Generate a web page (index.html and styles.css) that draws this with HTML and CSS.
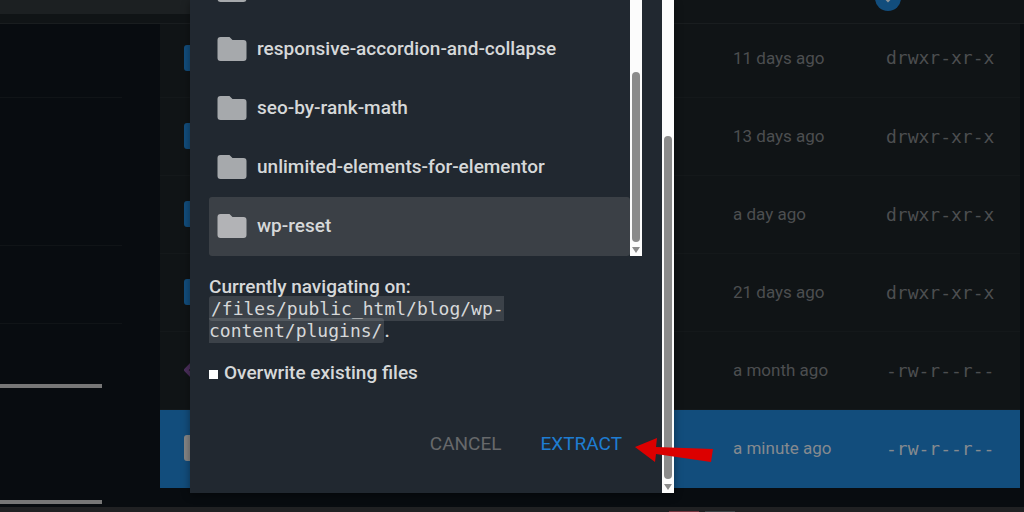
FILE: index.html
```
<!DOCTYPE html>
<html lang="en">
<head>
    <meta charset="UTF-8">
    <meta name="viewport" content="width=device-width, initial-scale=1.0">
    <title>File Manager</title>
    <link rel="stylesheet" href="styles.css">
</head>
<body>
    <header class="toolbar">
        <div class="tabs"></div>
        <button class="sort-btn" aria-label="Sort">
            <svg width="26" height="26" viewBox="0 0 26 26"><path d="M13 7v9M10 13l3 3 3-3" fill="none" stroke="#8d9499" stroke-width="2"/></svg>
        </button>
    </header>

    <main class="manager">
        <aside class="sidebar">
            <div class="group"></div>
            <div class="group tall"></div>
            <div class="group"></div>
            <div class="bar"></div>
            <div class="bar second"></div>
        </aside>

        <table class="files">
            <colgroup>
                <col>
                <col class="col-date">
                <col class="col-perm">
            </colgroup>
            <tbody>
                <tr>
                    <td><span class="icon"></span></td>
                    <td>11 days ago</td>
                    <td class="perm">drwxr-xr-x</td>
                </tr>
                <tr>
                    <td><span class="icon"></span></td>
                    <td>13 days ago</td>
                    <td class="perm">drwxr-xr-x</td>
                </tr>
                <tr>
                    <td><span class="icon"></span></td>
                    <td>a day ago</td>
                    <td class="perm">drwxr-xr-x</td>
                </tr>
                <tr>
                    <td><span class="icon"></span></td>
                    <td>21 days ago</td>
                    <td class="perm">drwxr-xr-x</td>
                </tr>
                <tr>
                    <td>
                        <svg class="code-icon" width="26" height="26" viewBox="0 0 26 26"><path d="M8 7l-6 6 6 6M18 7l6 6-6 6" fill="none" stroke="#4b2f5c" stroke-width="4"/></svg>
                    </td>
                    <td>a month ago</td>
                    <td class="perm">-rw-r--r--</td>
                </tr>
                <tr class="selected">
                    <td><span class="icon"></span></td>
                    <td>a minute ago</td>
                    <td class="perm">-rw-r--r--</td>
                </tr>
            </tbody>
        </table>
    </main>

    <footer class="taskbar">
        <span class="task red"></span>
        <span class="task"></span>
    </footer>

    <div class="dialog" role="dialog" aria-label="Extract archive">
        <div class="dialog-body">
            <div class="picker">
                <ul class="folders">
                    <li>
                        <svg class="folder" viewBox="0 0 29 24"><path d="M3 0h9l3 3h11a3 3 0 0 1 3 3v15a3 3 0 0 1-3 3H3a3 3 0 0 1-3-3V3a3 3 0 0 1 3-3z"/></svg>
                    </li>
                    <li>
                        <svg class="folder" viewBox="0 0 29 24"><path d="M3 0h9l3 3h11a3 3 0 0 1 3 3v15a3 3 0 0 1-3 3H3a3 3 0 0 1-3-3V3a3 3 0 0 1 3-3z"/></svg>
                        responsive-accordion-and-collapse
                    </li>
                    <li>
                        <svg class="folder" viewBox="0 0 29 24"><path d="M3 0h9l3 3h11a3 3 0 0 1 3 3v15a3 3 0 0 1-3 3H3a3 3 0 0 1-3-3V3a3 3 0 0 1 3-3z"/></svg>
                        seo-by-rank-math
                    </li>
                    <li>
                        <svg class="folder" viewBox="0 0 29 24"><path d="M3 0h9l3 3h11a3 3 0 0 1 3 3v15a3 3 0 0 1-3 3H3a3 3 0 0 1-3-3V3a3 3 0 0 1 3-3z"/></svg>
                        unlimited-elements-for-elementor
                    </li>
                    <li class="active">
                        <svg class="folder" viewBox="0 0 29 24"><path d="M3 0h9l3 3h11a3 3 0 0 1 3 3v15a3 3 0 0 1-3 3H3a3 3 0 0 1-3-3V3a3 3 0 0 1 3-3z"/></svg>
                        wp-reset
                    </li>
                </ul>
                <div class="scrollbar">
                    <div class="thumb"></div>
                    <div class="down"></div>
                </div>
            </div>

            <p class="path">Currently navigating on:<br><code>/files/public_html/blog/wp-<br>content/plugins/</code>.</p>

            <div class="overwrite">
                <input type="checkbox" id="overwrite">
                <label for="overwrite">Overwrite existing files</label>
            </div>

            <div class="actions">
                <button class="cancel">CANCEL</button>
                <button class="extract">EXTRACT</button>
            </div>
        </div>
        <div class="scrollbar outer">
            <div class="thumb"></div>
            <div class="down"></div>
        </div>
        <svg class="arrow" width="80" height="26" viewBox="0 0 80 26"><path d="M1 11L23 2l-1 9 57 2-2 13-55-8-1 8z" fill="#dc0000"/></svg>
    </div>
</body>
</html>
```
FILE: styles.css
```
* {
    box-sizing: border-box;
}

body {
    margin: 0;
    height: 100vh;
    display: flex;
    flex-direction: column;
    position: relative;
    overflow: hidden;
    background-color: #080c10;
    font-family: Roboto, sans-serif;
    font-size: 19px;
    font-weight: 500;
    color: #d6d8d9;
}

button {
    padding: 0;
    border: none;
    background: none;
    font: inherit;
    font-weight: 400;
    cursor: pointer;
}

/* top toolbar */
.toolbar {
    position: relative;
    z-index: 1;
    flex: none;
    height: 24px;
    background-color: #101416;
    border-bottom: 1px solid #191d1f;
}

.tabs {
    width: 40%;
    height: 14px;
    background-color: #1c2022;
}

.sort-btn {
    position: absolute;
    top: -15px;
    right: 123px;
    width: 26px;
    height: 26px;
    border-radius: 50%;
    background-color: #124d7c;
}

.sort-btn svg {
    display: block;
}

/* sidebar and file table */
.manager {
    flex: 1;
    display: flex;
    align-items: flex-start;
    margin-top: -5px;
    padding-right: 4px;
}

.sidebar {
    flex: none;
    width: 160px;
    padding-top: 1px;
}

.group {
    width: 122px;
    height: 78px;
    border-bottom: 1px solid #101417;
}

.group.tall {
    height: 148px;
}

.bar {
    width: 102px;
    height: 4px;
    margin-top: 60px;
    background-color: #777777;
}

.bar.second {
    margin-top: 112px;
}

.files {
    flex: 1;
    table-layout: fixed;
    border-collapse: collapse;
    background-color: #101416;
    color: #4c4e50;
    font-size: 17px;
    font-weight: 400;
}

.col-date {
    width: 153px;
}

.col-perm {
    width: 134px;
}

.files td {
    height: 78px;
    padding: 0;
    border-bottom: 1px solid #14181a;
    vertical-align: middle;
}

.files td:first-child {
    padding-left: 24px;
}

.files .perm {
    font-family: "DejaVu Sans Mono", monospace;
    font-size: 18px;
}

.icon {
    display: block;
    width: 30px;
    height: 26px;
    border-radius: 3px;
    background-color: #124d7c;
}

.code-icon {
    display: block;
}

.files .selected {
    background-color: #124d7c;
    color: #858a8f;
}

.files .selected td {
    border-bottom-color: #124d7c;
}

.selected .icon {
    background-color: #858585;
}

.taskbar {
    flex: none;
    display: flex;
    align-items: flex-end;
    gap: 6px;
    height: 5px;
    padding-left: 669px;
    background-color: #202123;
}

.task {
    width: 30px;
    height: 1px;
    background-color: #3c4145;
}

.task.red {
    background-color: #74343e;
}

/* extract dialog */
.dialog {
    position: absolute;
    z-index: 2;
    top: 0;
    left: 190px;
    right: 350px;
    display: flex;
    background-color: #212830;
    box-shadow: 0 2px 8px rgba(0, 0, 0, 0.4);
}

.dialog-body {
    flex: 1;
    padding: 0 20px 36px 19px;
}

.picker {
    display: flex;
    height: 256px;
    overflow: hidden;
}

.folders {
    flex: 1;
    display: flex;
    flex-direction: column;
    justify-content: flex-end;
    margin: 0;
    padding: 0;
    list-style: none;
}

.folders li {
    flex: none;
    display: flex;
    align-items: center;
    gap: 10px;
    height: 59px;
    padding: 0 0 2px 8px;
    border-radius: 3px;
}

.folders .active {
    background-color: #3b4046;
}

.folder {
    width: 30px;
    height: 24px;
    fill: #a6a9ac;
}

.active .folder {
    fill: #b2b3b6;
}

.scrollbar {
    flex: none;
    display: flex;
    flex-direction: column;
    align-items: center;
    justify-content: flex-end;
    gap: 5px;
    width: 12px;
    padding-bottom: 3px;
    background-color: #fcfcfc;
}

.thumb {
    width: 8px;
    height: 170px;
    border-radius: 4px;
    background-color: #8b8b8b;
}

.outer .thumb {
    height: 343px;
}

.down {
    border: 4px solid transparent;
    border-top: 6px solid #8b8b8b;
    border-bottom: none;
}

.path {
    margin: 20px 0 0;
    line-height: 22px;
}

.path code {
    padding: 2px;
    border-radius: 3px;
    background-color: rgba(255, 255, 255, 0.12);
    font-family: "DejaVu Sans Mono", monospace;
    font-size: 18px;
    font-weight: 400;
}

.overwrite {
    display: flex;
    align-items: center;
    gap: 6px;
    margin-top: 19px;
    line-height: 24px;
}

.overwrite input {
    appearance: none;
    width: 9px;
    height: 9px;
    margin: 2px 0 0;
    background-color: #ffffff;
}

.actions {
    display: flex;
    justify-content: flex-end;
    gap: 39px;
    margin-top: 46px;
    padding-right: 20px;
    line-height: 26px;
}

.cancel {
    color: #67696b;
}

.extract {
    color: #1e7dd2;
}

.arrow {
    position: absolute;
    right: -40px;
    bottom: 31px;
}
```
